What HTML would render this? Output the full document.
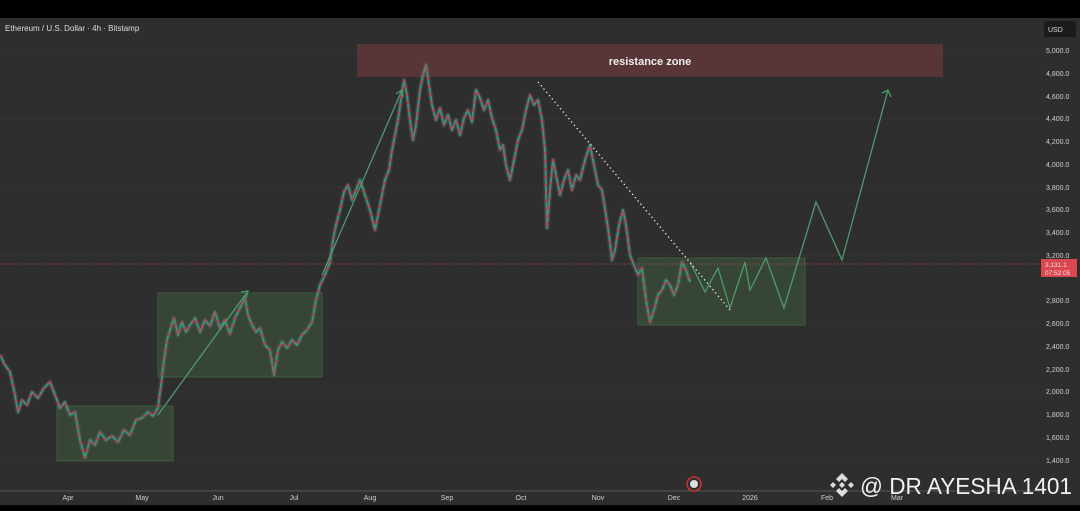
<!DOCTYPE html>
<html><head><meta charset="utf-8"><style>
html,body{margin:0;padding:0;background:#000;}
#w{position:relative;width:1080px;height:511px;background:#000;overflow:hidden;font-family:"Liberation Sans",sans-serif;}
#c{position:absolute;left:0;top:18px;width:1080px;height:487px;background:#2e2e2e;}
svg{position:absolute;left:0;top:0;}
</style></head><body><div id="w"><div id="c"></div>
<svg width="1080" height="511" xmlns="http://www.w3.org/2000/svg">
<defs><polyline id="pr" points="0,355 5,365 10,372 15,395 18,412 22,400 27,405 32,392 38,398 44,388 50,382 55,395 60,408 65,402 70,415 75,412 80,440 85,458 90,440 95,445 100,432 106,440 112,436 118,442 124,430 130,435 136,420 142,418 148,412 153,416 158,408 161,385 164,360 167,340 170,330 174,318 178,335 182,322 186,332 190,325 195,318 200,332 205,320 210,326 215,312 220,328 225,320 230,334 235,318 240,308 245,298 248,315 252,325 256,332 260,328 265,345 270,350 274,375 278,350 282,342 287,348 292,340 297,345 302,335 307,330 312,322 316,300 320,285 325,275 330,262 333,240 336,225 340,210 344,192 348,185 352,200 356,190 360,180 365,195 370,210 375,230 380,205 385,180 389,170 392,150 395,135 398,120 401,100 404,80 407,95 410,120 413,140 416,125 420,90 423,75 426,65 429,85 432,105 436,120 440,108 444,125 448,115 452,130 456,120 460,135 464,118 468,110 472,122 476,90 480,98 484,110 488,100 492,118 496,130 500,150 503,145 506,165 510,180 514,160 518,140 522,130 526,110 530,95 534,105 538,100 542,120 545,150 547,228 550,190 553,160 556,175 560,195 564,180 568,170 572,190 576,175 580,180 585,160 590,145 594,165 598,185 602,190 606,215 609,235 612,260 615,250 619,225 623,210 626,225 630,255 634,265 638,275 642,268 646,300 650,322 654,310 658,295 662,290 666,280 670,285 674,295 678,285 682,262 686,270 690,282"/></defs>
<g stroke="#343434" stroke-width="1">
<line x1="0" y1="50" x2="1040" y2="50"/><line x1="0" y1="119" x2="1040" y2="119"/><line x1="0" y1="187" x2="1040" y2="187"/><line x1="0" y1="255" x2="1040" y2="255"/><line x1="0" y1="323" x2="1040" y2="323"/><line x1="0" y1="392" x2="1040" y2="392"/><line x1="0" y1="460" x2="1040" y2="460"/>
</g>
<text x="5" y="31" fill="#ddd" font-size="8">Ethereum / U.S. Dollar · 4h · Bitstamp</text>
<rect x="357" y="44" width="586" height="33" fill="#583637"/>
<text x="650" y="65" fill="#eee" font-size="11" font-weight="bold" text-anchor="middle">resistance zone</text>
<rect x="57" y="406" width="116" height="55" fill="#3a4d38" fill-opacity="0.75" stroke="#3f5a3e"/>
<rect x="158" y="293" width="164" height="84" fill="#3a4d38" fill-opacity="0.75" stroke="#3f5a3e"/>
<rect x="638" y="258" width="167" height="67" fill="#3a4d38" fill-opacity="0.75" stroke="#3f5a3e"/>
<line x1="0" y1="264" x2="1040" y2="264" stroke="#c0504a" stroke-width="1" stroke-dasharray="1,2"/>
<g fill="none" stroke-linejoin="round">
<use href="#pr" stroke="#5a6a66" stroke-width="5" stroke-opacity="0.35"/>
<use href="#pr" stroke="#3f8f7f" stroke-width="2"/>
<use href="#pr" stroke="#b8434f" stroke-width="2" stroke-dasharray="3,5"/>
</g>
<g stroke="#4f9a6a" stroke-width="1.3" fill="none">
<polyline points="158,415 248,291"/><polyline points="241,292 248,291 246,298"/>
<polyline points="322,275 402,90"/><polyline points="396,94 402,90 403,97"/>
<polyline points="690,262 705,292 718,268 730,308 745,262 750,290 766,258 784,308 816,202 842,260 888,90"/>
<polyline points="882,93 888,90 891,97"/>
</g>
<line x1="538" y1="82" x2="730" y2="310" stroke="#eee" stroke-width="1.3" stroke-dasharray="1.3,3"/>
<line x1="0" y1="491" x2="1040" y2="491" stroke="#555"/>
<rect x="1044" y="21" width="32" height="16" rx="2" fill="#1b1b1b"/>
<text x="1048" y="32" fill="#ddd" font-size="7">USD</text>
<g fill="#cfcfcf" font-size="7"><text x="1046" y="53">5,000.0</text><text x="1046" y="76">4,800.0</text><text x="1046" y="99">4,600.0</text><text x="1046" y="121">4,400.0</text><text x="1046" y="144">4,200.0</text><text x="1046" y="167">4,000.0</text><text x="1046" y="190">3,800.0</text><text x="1046" y="212">3,600.0</text><text x="1046" y="235">3,400.0</text><text x="1046" y="258">3,200.0</text><text x="1046" y="303">2,800.0</text><text x="1046" y="326">2,600.0</text><text x="1046" y="349">2,400.0</text><text x="1046" y="372">2,200.0</text><text x="1046" y="394">2,000.0</text><text x="1046" y="417">1,800.0</text><text x="1046" y="440">1,600.0</text><text x="1046" y="463">1,400.0</text></g>
<rect x="1041" y="259" width="36" height="18" fill="#d9474f"/>
<text x="1045" y="267" fill="#fde" font-size="6.5">3,131.1</text><text x="1045" y="275" fill="#fde" font-size="6.5">07:52:05</text>
<g fill="#cfcfcf" font-size="7" text-anchor="middle"><text x="68" y="500">Apr</text><text x="142" y="500">May</text><text x="218" y="500">Jun</text><text x="294" y="500">Jul</text><text x="370" y="500">Aug</text><text x="447" y="500">Sep</text><text x="521" y="500">Oct</text><text x="598" y="500">Nov</text><text x="674" y="500">Dec</text><text x="750" y="500">2026</text><text x="827" y="500">Feb</text><text x="897" y="500">Mar</text></g>
<circle cx="694" cy="484" r="7" fill="none" stroke="#c33" stroke-width="1.5"/><circle cx="694" cy="484" r="4" fill="#ddd"/>
<g fill="#ddd" transform="translate(842,485)"><path d="M0,-12 L6,-6 L3,-3 L0,-6 L-3,-3 L-6,-6Z M0,12 L6,6 L3,3 L0,6 L-3,3 L-6,6Z M-12,0 L-9,-3 L-6,0 L-9,3Z M12,0 L9,-3 L6,0 L9,3Z M0,-3 L3,0 L0,3 L-3,0Z"/></g>
<text x="860" y="494" fill="#f2f2f2" font-size="23" textLength="212" lengthAdjust="spacingAndGlyphs">@ DR AYESHA 1401</text>
</svg>
</div></body></html>
